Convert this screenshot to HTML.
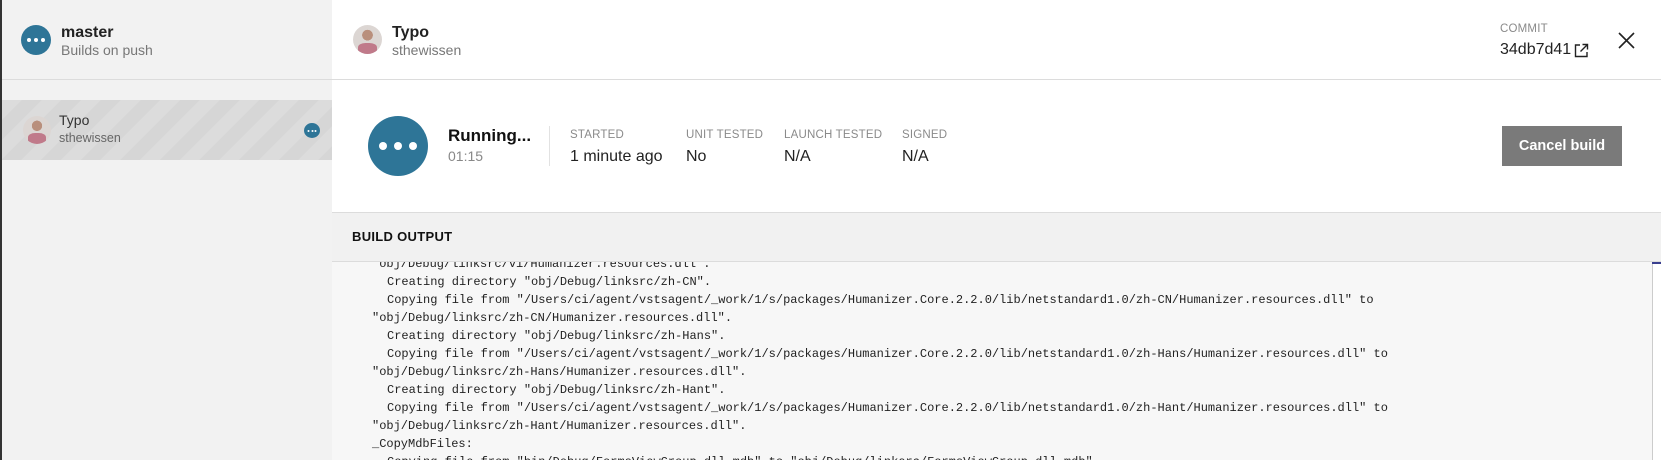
<!DOCTYPE html><html><head><style>
*{margin:0;padding:0;box-sizing:border-box}
body{width:1661px;height:460px;overflow:hidden;font-family:"Liberation Sans",sans-serif;background:#fff;position:relative;color:#222}
.a{position:absolute;white-space:nowrap}
.circ{position:absolute;border-radius:50%;background:#2e7597}
.dots{position:absolute;left:50%;top:50%;transform:translate(-50%,-50%);display:flex;gap:var(--g)}
.dots i{display:block;width:var(--d);height:var(--d);border-radius:50%;background:#fff}
.av{position:absolute;border-radius:50%;background:radial-gradient(circle at 50% 35%,#b98f7c 0 22%,#dcd6d3 23% 100%);overflow:hidden}
.av::after{content:"";position:absolute;left:18%;right:18%;bottom:0;height:38%;background:#c07a8a;border-radius:40% 40% 0 0}
.lab{font-size:11.5px;color:#8a8a8a;letter-spacing:.2px}
.val{font-size:16px;color:#222}
.log{position:absolute;left:332px;top:262px;width:1320px;height:198px;background:#f7f7f7;overflow:hidden;font-family:"Liberation Mono",monospace;font-size:12px;color:#222}
.log div{position:absolute;white-space:pre;height:18px;line-height:18px}
</style></head><body>
<div class="a" style="left:0;top:0;width:2px;height:460px;background:#333"></div>
<div class="a" style="left:2px;top:0;width:330px;height:460px;background:#f2f2f2"></div>
<div class="a" style="left:2px;top:79px;width:1659px;height:1px;background:#dcdcdc"></div>
<div class="circ" style="left:21px;top:25px;width:30px;height:30px;--g:3px;--d:4px"><div class="dots"><i></i><i></i><i></i></div></div>
<div class="a" style="left:61px;top:24px;font-size:16px;font-weight:bold;color:#222">master</div>
<div class="a" style="left:61px;top:42px;font-size:14px;color:#777">Builds on push</div>
<div class="a" style="left:2px;top:100px;width:330px;height:60px;background:repeating-linear-gradient(135deg,#dcdcdc 0 14px,#d6d6d6 14px 28px)"></div>
<div class="av" style="left:23px;top:116px;width:28px;height:28px"></div>
<div class="a" style="left:59px;top:112px;font-size:14px;color:#333">Typo</div>
<div class="a" style="left:59px;top:131px;font-size:12.5px;color:#666">sthewissen</div>
<div class="circ" style="left:304px;top:123px;width:16px;height:15px;--g:1.5px;--d:2px"><div class="dots"><i></i><i></i><i></i></div></div>
<div class="av" style="left:353px;top:25px;width:29px;height:29px"></div>
<div class="a" style="left:392px;top:24px;font-size:16px;font-weight:bold;color:#222">Typo</div>
<div class="a" style="left:392px;top:42px;font-size:14px;color:#777">sthewissen</div>
<div class="a lab" style="left:1500px;top:23px">COMMIT</div>
<div class="a" style="left:1500px;top:41px;font-size:16px;color:#222">34db7d41</div>
<svg class="a" style="left:1574px;top:43px" width="15" height="15" viewBox="0 0 15 15" fill="none" stroke="#222" stroke-width="1.4"><path d="M6 2H1.5V13.5H13V9M8.5 1.5H13.5V6.5M13.5 1.5L6.5 8.5"/></svg>
<svg class="a" style="left:1618px;top:32px" width="17" height="17" viewBox="0 0 17 17" stroke="#222" stroke-width="1.6"><path d="M1 1L16 16M16 1L1 16"/></svg>
<div class="circ" style="left:368px;top:116px;width:60px;height:60px;--g:7px;--d:8px"><div class="dots"><i></i><i></i><i></i></div></div>
<div class="a" style="left:448px;top:126px;font-size:17px;font-weight:bold;color:#111">Running...</div>
<div class="a" style="left:448px;top:148px;font-size:14px;color:#888">01:15</div>
<div class="a" style="left:549px;top:126px;width:1px;height:40px;background:#e2e2e2"></div>
<div class="a lab" style="left:570px;top:129px">STARTED</div><div class="a val" style="left:570px;top:148px">1 minute ago</div>
<div class="a lab" style="left:686px;top:129px">UNIT TESTED</div><div class="a val" style="left:686px;top:148px">No</div>
<div class="a lab" style="left:784px;top:129px">LAUNCH TESTED</div><div class="a val" style="left:784px;top:148px">N/A</div>
<div class="a lab" style="left:902px;top:129px">SIGNED</div><div class="a val" style="left:902px;top:148px">N/A</div>
<div class="a" style="left:1502px;top:126px;width:120px;height:40px;background:#7a7a7a;color:#fff;font-weight:bold;font-size:14.5px;text-align:center;line-height:40px">Cancel build</div>
<div class="a" style="left:332px;top:212px;width:1329px;height:50px;background:#f1f1f1;border-top:1px solid #dcdcdc;border-bottom:1px solid #dcdcdc"></div>
<div class="a" style="left:352px;top:229px;font-size:13px;font-weight:bold;color:#111;letter-spacing:.3px">BUILD OUTPUT</div>
<div class="log">
<div style="left:40px;top:-7px">"obj/Debug/linksrc/vi/Humanizer.resources.dll".</div>
<div style="left:55px;top:11px">Creating directory "obj/Debug/linksrc/zh-CN".</div>
<div style="left:55px;top:29px">Copying file from "/Users/ci/agent/vstsagent/_work/1/s/packages/Humanizer.Core.2.2.0/lib/netstandard1.0/zh-CN/Humanizer.resources.dll" to</div>
<div style="left:40px;top:47px">"obj/Debug/linksrc/zh-CN/Humanizer.resources.dll".</div>
<div style="left:55px;top:65px">Creating directory "obj/Debug/linksrc/zh-Hans".</div>
<div style="left:55px;top:83px">Copying file from "/Users/ci/agent/vstsagent/_work/1/s/packages/Humanizer.Core.2.2.0/lib/netstandard1.0/zh-Hans/Humanizer.resources.dll" to</div>
<div style="left:40px;top:101px">"obj/Debug/linksrc/zh-Hans/Humanizer.resources.dll".</div>
<div style="left:55px;top:119px">Creating directory "obj/Debug/linksrc/zh-Hant".</div>
<div style="left:55px;top:137px">Copying file from "/Users/ci/agent/vstsagent/_work/1/s/packages/Humanizer.Core.2.2.0/lib/netstandard1.0/zh-Hant/Humanizer.resources.dll" to</div>
<div style="left:40px;top:155px">"obj/Debug/linksrc/zh-Hant/Humanizer.resources.dll".</div>
<div style="left:40px;top:173px">_CopyMdbFiles:</div>
<div style="left:55px;top:191px">Copying file from "bin/Debug/FormsViewGroup.dll.mdb" to "obj/Debug/linksrc/FormsViewGroup.dll.mdb".</div>
</div>
<div class="a" style="left:1652px;top:262px;width:1px;height:198px;background:#ccc"></div>
<div class="a" style="left:1652px;top:262px;width:9px;height:2px;background:#3a3f8f"></div>
</body></html>
